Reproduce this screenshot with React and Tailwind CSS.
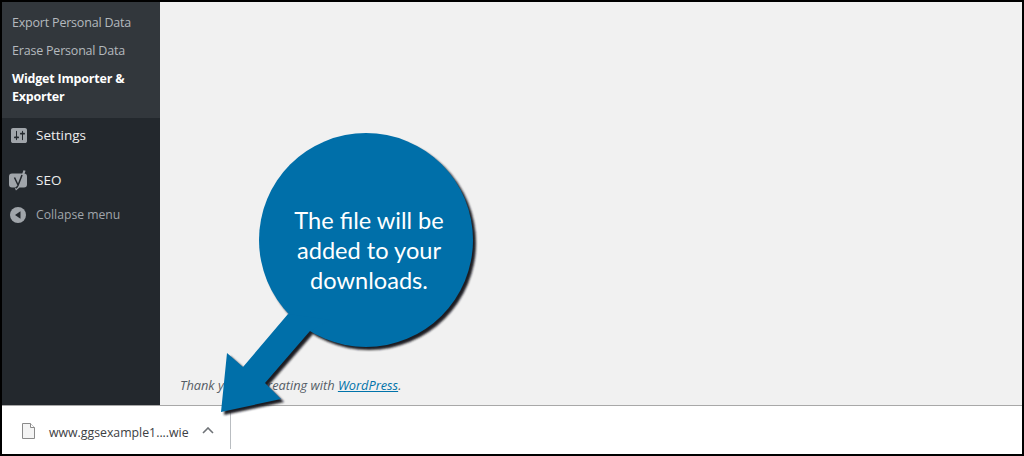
const SettingsIcon = () => (
  <svg width="16" height="15" viewBox="2 2 16 16" preserveAspectRatio="none" className="shrink-0">
    <path
      fill="#a0a5aa"
      fillRule="evenodd"
      d="M18 16V4c0-1.1-.9-2-2-2H4c-1.1 0-2 .9-2 2v12c0 1.100.9 2 2 2h12c1.100 0 2-.9 2-2zM8 11h1c.55 0 1 .45 1 1s-.45 1-1 1H8v1.500c0 .28-.22.5-.5.5s-.5-.22-.5-.5V13H6c-.55 0-1-.45-1-1s.45-1 1-1h1V5.500c0-.28.22-.5.5-.5s.5.22.5.5V11zm5-2h-1c-.55 0-1-.45-1-1s.45-1 1-1h1V5.500c0-.28.22-.5.5-.5s.5.22.5.5V7h1c.55 0 1 .45 1 1s-.45 1-1 1h-1v5.500c0 .28-.22.5-.5.5s-.5-.22-.5-.5V9z"
    />
  </svg>
);

const YoastIcon = () => (
  <svg width="19" height="21" viewBox="0 0 19 21" className="shrink-0">
    <path d="M3 3.500h12a3 3 0 0 1 3 3v8a3 3 0 0 1-3 3H3a3 3 0 0 1-3-3v-8a3 3 0 0 1 3-3z" fill="#a0a5aa" />
    <path d="M15.500 0.500L10.500 15c-.7 2-2 3.500-4 4.500" stroke="#a0a5aa" strokeWidth="2.200" fill="none" />
    <path d="M5.500 7.500l3.500 7.500M13 5L9 15.500c-.5 1.200-1.200 2-2.200 2.500" stroke="#23282d" strokeWidth="1.500" fill="none" />
  </svg>
);

const CollapseIcon = () => (
  <svg width="16" height="16" viewBox="0 0 16 16" className="shrink-0">
    <circle cx="8" cy="8" r="8" fill="#a0a5aa" />
    <path d="M10.500 4.200v7.600L5 8z" fill="#23282d" />
  </svg>
);

const FileIcon = () => (
  <svg width="13" height="16" viewBox="0 0 13 16" className="shrink-0 mt-[6px]">
    <path d="M.5.5h8l4 4v11H.5z" fill="#f4f4f4" stroke="#8a8a8a" />
    <path d="M8.500.5v4h4" fill="#fff" stroke="#8a8a8a" />
  </svg>
);

// callout circle + arrow, sits on top of everything
const Callout = () => (
  <svg width="1020" height="452" viewBox="2 2 1020 452" className="absolute top-0 left-0 pointer-events-none">
    <defs>
      <filter id="soft" x="-10%" y="-10%" width="120%" height="120%">
        <feGaussianBlur stdDeviation="0.8" />
      </filter>
    </defs>
    <g fill="#1d1d22" filter="url(#soft)" transform="translate(3 3)">
      <circle cx="366" cy="240" r="107" />
      <path d="M288 314L243 367L227 353L221 412L281 399L265 383L310 331z" />
    </g>
    <circle cx="366" cy="240" r="107" fill="#006fa9" />
    <path d="M288 314L243 367L227 353L221 412L281 399L265 383L310 331L330 320z" fill="#006fa9" />
  </svg>
);

export default function App() {
  return (
    <div className="relative w-[1024px] h-[456px] border-2 border-black flex flex-col bg-white overflow-hidden font-['Open_Sans',sans-serif]">
      <div className="flex flex-1 min-h-0">
        {/* Sidebar */}
        <div className="w-[158px] bg-[#23282d] shrink-0">
          <div className="bg-[#32373c] pt-[12px] pb-[12px] pl-[10px] pr-2 flex flex-col gap-[10px] text-[12.5px] tracking-[-0.2px] leading-[18px] text-[#b4b9be]">
            <div>Export Personal Data</div>
            <div>Erase Personal Data</div>
            <div className="font-bold text-white">Widget Importer &amp; Exporter</div>
          </div>
          <div className="flex items-center gap-[9px] pl-[9px] mt-[8px] h-[18px] text-[13.5px] text-[#eeeeee]">
            <SettingsIcon />
            <span>Settings</span>
          </div>
          <div className="flex items-center gap-[8px] pl-[7px] mt-[27px] h-[18px] text-[13.5px] text-[#eeeeee]">
            <YoastIcon />
            <span>SEO</span>
          </div>
          <div className="flex items-center gap-[10px] pl-[8px] mt-[17px] h-[18px] text-[12.2px] text-[#a0a5aa]">
            <CollapseIcon />
            <span>Collapse menu</span>
          </div>
        </div>

        {/* Main */}
        <div className="flex-1 bg-[#f1f1f1] flex flex-col justify-end px-5 pb-[11px]">
          <p className="italic text-[12.8px] leading-[18px] text-[#555d66]">
            Thank you for creating with <span className="underline text-[#0073aa]">WordPress</span>.
          </p>
        </div>
      </div>

      {/* Download bar */}
      <div className="h-[49px] shrink-0 border-t border-[#a8a8a8] bg-white flex items-center text-[12.3px] text-[#3c4043]">
        <div className="w-[229px] h-[42px] mb-[5px] border-r border-[#b9bdc1] flex items-center pl-5 shrink-0">
          <FileIcon />
          <span className="ml-[14px] mt-[12px]">www.ggsexample1....wie</span>
          <svg width="12" height="7" viewBox="0 0 12 7" className="ml-[13px] mt-[6px]">
            <path d="M1 6l5-5 5 5" stroke="#6f7377" strokeWidth="1.6" fill="none" />
          </svg>
        </div>
      </div>

      <Callout />
      <div className="absolute left-[260px] top-[203px] w-[214px] text-center text-white text-[23.6px] leading-[30px] font-['Lato',sans-serif]">
        <div>The file will be</div>
        <div>added to your</div>
        <div>downloads.</div>
      </div>
    </div>
  );
}
